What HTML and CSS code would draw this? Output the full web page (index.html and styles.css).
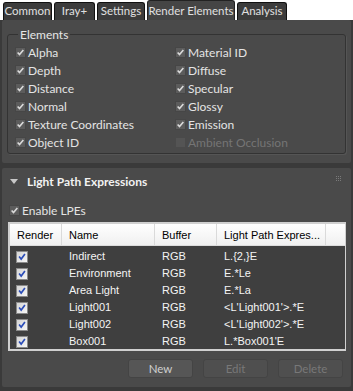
FILE: index.html
```html
<!DOCTYPE html>
<html>
<head>
<meta charset="utf-8">
<link rel="stylesheet" href="styles.css">
</head>
<body>
<div class="tabs">
  <div class="tab t-common">Common</div>
  <div class="tab t-iray">Iray+</div>
  <div class="tab t-settings">Settings</div>
  <div class="tab t-render active">Render Elements</div>
  <div class="tab t-analysis">Analysis</div>
</div>
<div class="content">
  <div class="rollout r1">
    <fieldset class="group">
      <legend>Elements</legend>
      <div class="grid">
        <label class="cb"><span class="box"><svg viewBox="0 0 11 11"><path d="M2 5.5 L4.3 8 L9 2.5"/></svg></span>Alpha</label>
        <label class="cb"><span class="box"><svg viewBox="0 0 11 11"><path d="M2 5.5 L4.3 8 L9 2.5"/></svg></span>Material ID</label>
        <label class="cb"><span class="box"><svg viewBox="0 0 11 11"><path d="M2 5.5 L4.3 8 L9 2.5"/></svg></span>Depth</label>
        <label class="cb"><span class="box"><svg viewBox="0 0 11 11"><path d="M2 5.5 L4.3 8 L9 2.5"/></svg></span>Diffuse</label>
        <label class="cb"><span class="box"><svg viewBox="0 0 11 11"><path d="M2 5.5 L4.3 8 L9 2.5"/></svg></span>Distance</label>
        <label class="cb"><span class="box"><svg viewBox="0 0 11 11"><path d="M2 5.5 L4.3 8 L9 2.5"/></svg></span>Specular</label>
        <label class="cb"><span class="box"><svg viewBox="0 0 11 11"><path d="M2 5.5 L4.3 8 L9 2.5"/></svg></span>Normal</label>
        <label class="cb"><span class="box"><svg viewBox="0 0 11 11"><path d="M2 5.5 L4.3 8 L9 2.5"/></svg></span>Glossy</label>
        <label class="cb"><span class="box"><svg viewBox="0 0 11 11"><path d="M2 5.5 L4.3 8 L9 2.5"/></svg></span>Texture Coordinates</label>
        <label class="cb"><span class="box"><svg viewBox="0 0 11 11"><path d="M2 5.5 L4.3 8 L9 2.5"/></svg></span>Emission</label>
        <label class="cb"><span class="box"><svg viewBox="0 0 11 11"><path d="M2 5.5 L4.3 8 L9 2.5"/></svg></span>Object ID</label>
        <label class="cb disabled"><span class="box"></span>Ambient Occlusion</label>
      </div>
    </fieldset>
  </div>
  <div class="rollout r2">
    <div class="rhead">
      <span class="tri"></span>
      <span class="rtitle">Light Path Expressions</span>
      <span class="grip"></span>
    </div>
    <label class="cb enable"><span class="box"><svg viewBox="0 0 11 11"><path d="M2 5.5 L4.3 8 L9 2.5"/></svg></span>Enable LPEs</label>
    <div class="table">
      <div class="thead">
        <div class="c c1">Render</div>
        <div class="c c2">Name</div>
        <div class="c c3">Buffer</div>
        <div class="c c4">Light Path Expres...</div>
        <div class="c c5"></div>
      </div>
      <div class="rows">
        <div class="row"><div class="c c1"><span class="wbox"><svg viewBox="0 0 12 12"><path d="M2.5 5.5 L5 8.5 L9.5 2.5"/></svg></span></div><div class="c c2">Indirect</div><div class="c c3">RGB</div><div class="c c4">L.{2,}E</div></div>
        <div class="row"><div class="c c1"><span class="wbox"><svg viewBox="0 0 12 12"><path d="M2.5 5.5 L5 8.5 L9.5 2.5"/></svg></span></div><div class="c c2">Environment</div><div class="c c3">RGB</div><div class="c c4">E.*Le</div></div>
        <div class="row"><div class="c c1"><span class="wbox"><svg viewBox="0 0 12 12"><path d="M2.5 5.5 L5 8.5 L9.5 2.5"/></svg></span></div><div class="c c2">Area Light</div><div class="c c3">RGB</div><div class="c c4">E.*La</div></div>
        <div class="row"><div class="c c1"><span class="wbox"><svg viewBox="0 0 12 12"><path d="M2.5 5.5 L5 8.5 L9.5 2.5"/></svg></span></div><div class="c c2">Light001</div><div class="c c3">RGB</div><div class="c c4">&lt;L'Light001'&gt;.*E</div></div>
        <div class="row"><div class="c c1"><span class="wbox"><svg viewBox="0 0 12 12"><path d="M2.5 5.5 L5 8.5 L9.5 2.5"/></svg></span></div><div class="c c2">Light002</div><div class="c c3">RGB</div><div class="c c4">&lt;L'Light002'&gt;.*E</div></div>
        <div class="row"><div class="c c1"><span class="wbox"><svg viewBox="0 0 12 12"><path d="M2.5 5.5 L5 8.5 L9.5 2.5"/></svg></span></div><div class="c c2">Box001</div><div class="c c3">RGB</div><div class="c c4">L.*Box001'E</div></div>
      </div>
    </div>
    <div class="buttons">
      <div class="btn">New</div>
      <div class="btn dis">Edit</div>
      <div class="btn dis">Delete</div>
    </div>
  </div>
</div>
</body>
</html>
```
FILE: styles.css
```css
* { box-sizing: border-box; }
html, body { margin: 0; padding: 0; }
body {
  width: 353px; height: 391px; overflow: hidden;
  background: #3a3a3a;
  font-family: Lato, "Noto Sans", sans-serif;
  font-size: 11.5px;
  color: #dcdcdc;
}
.tabs {
  display: flex; align-items: flex-end;
  height: 20px; background: #ffffff;
  padding-left: 3px; gap: 2px;
}
.tab {
  height: 18px; line-height: 16px;
  padding: 0;
  text-align: center;
  background: #3c3c3c;
  border: 1px solid #111;
  border-bottom: none;
  border-radius: 3px 3px 0 0;
  color: #e0e0e0;
  font-size: 11.5px;
  white-space: nowrap;
}
.t-common { width: 49px; }
.t-iray { width: 41px; }
.t-settings { width: 48px; }
.t-render { width: 88px; }
.t-analysis { width: 50px; }
.tab.active {
  height: 20px; line-height: 19px;
  background: #454545;
  border-color: #222;
}
.content {
  padding: 0 2px 4px 2px;
  display: flex; flex-direction: column; gap: 5px;
}
.rollout {
  background: #4a4a4a;
  border-radius: 2px;
}
.r1 { height: 143px; padding: 9px 5px 0 5px; }
.group {
  margin: 0; padding: 4px 0 0 7px;
  border: 1px solid #333;
  border-radius: 3px;
  height: 125px;
  box-shadow: 1px 1px 0 #555;
}
.group legend {
  padding: 0 2px; margin-left: 3px;
  line-height: 11px;
  font-size: 12px;
  color: #e6e6e6;
}
.grid {
  display: grid;
  grid-template-columns: 160px 160px;
  row-gap: 2px;
}
.cb {
  display: flex; align-items: center;
  height: 16px; gap: 2px;
  color: #e4e4e4;
  font-size: 12px;
}
.box {
  width: 11px; height: 11px;
  background: #5c5c5c;
  border: 1px solid #464646;
  flex: none;
  display: block;
}
.box svg { display: block; width: 9px; height: 9px; }
.box path { fill: none; stroke: #dadada; stroke-width: 2; }
.cb.disabled { color: #757575; }
.cb.disabled .box { background: #545454; border-color: #4a4a4a; }
.r2 { height: 219px; padding: 0; }
.rhead {
  height: 26px; display: flex; align-items: center;
  padding-left: 8px;
}
.tri {
  width: 0; height: 0;
  border-left: 4px solid transparent;
  border-right: 4px solid transparent;
  border-top: 5px solid #c8c8c8;
  margin-right: 9px;
}
.rtitle { font-weight: bold; color: #f2f2f2; font-size: 12px; flex: 1; }
.grip {
  width: 6px; height: 6px; margin-right: 9px; margin-top: -4px;
  background-image: radial-gradient(circle at 0.5px 0.5px, #7a7a7a 0.7px, transparent 0.8px);
  background-size: 2px 2px;
}
.enable { margin: 8px 0 0 7px; }
.table {
  margin: 4px 5px 0 6px;
  border: 2px solid #d0d0d0;
  border-right-width: 1px;
  height: 129px;
  background: #3f3f3f;
  font-family: "Liberation Sans", Arial, sans-serif;
  font-size: 11px;
}
.thead {
  display: flex; height: 22px;
  background: linear-gradient(#ffffff, #f0f0f0);
  color: #000;
  border-bottom: 1px solid #dcdcdc;
}
.thead .c {
  line-height: 22px;
  border-right: 1px solid #dadada;
}
.c { padding-left: 7px; white-space: nowrap; overflow: hidden; }
.c1 { width: 52px; }
.c2 { width: 93px; }
.c3 { width: 62px; }
.c4 { width: 109px; }
.c5 { flex: 1; border-right: none !important; }
.rows { padding-top: 2px; }
.row { display: flex; height: 17px; line-height: 17px; color: #f4f4f4; }
.wbox {
  display: inline-block; width: 12px; height: 12px;
  margin-top: 3px; margin-left: -1px;
  background: linear-gradient(135deg, #d4d4d4, #f6f6f6);
  border: 1px solid #8a8a8a;
  vertical-align: top;
}
.wbox svg { display: block; width: 10px; height: 10px; }
.wbox path { fill: none; stroke: #2a4cb8; stroke-width: 2; }
.buttons {
  display: flex; justify-content: flex-end; gap: 10px;
  margin: 8px 8px 0 0;
}
.btn {
  width: 65px; height: 19px; line-height: 18px;
  text-align: center;
  background: #565656;
  border: 1px solid #444;
  border-radius: 3px;
  color: #cfcfcf;
}
.btn.dis { color: #787878; background: #4f4f4f; }
```
